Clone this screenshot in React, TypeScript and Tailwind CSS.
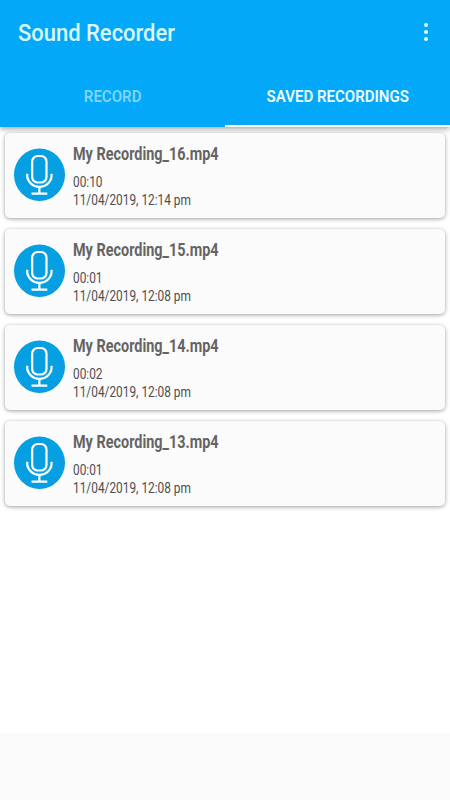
const recordings = [
  { name: "My Recording_16.mp4", length: "00:10", date: "11/04/2019, 12:14 pm" },
  { name: "My Recording_15.mp4", length: "00:01", date: "11/04/2019, 12:08 pm" },
  { name: "My Recording_14.mp4", length: "00:02", date: "11/04/2019, 12:08 pm" },
  { name: "My Recording_13.mp4", length: "00:01", date: "11/04/2019, 12:08 pm" },
];

const MicIcon = () => (
  <svg width="51" height="53" viewBox="0 0 51 53" fill="none" className="shrink-0">
    <ellipse cx="25.5" cy="26.7" rx="25.5" ry="26.2" fill="#059fe2" />
    <g stroke="white" strokeWidth="2.2">
      <rect x="18.2" y="8" width="14.3" height="26.5" rx="5.5" />
      <path d="M13.2 25.7v1.200a12.200 12 0 0 0 24.400 0v-1.200M25.400 38.900v6.800M17.500 45.700h15.800" />
    </g>
  </svg>
);

const App = () => {
  return (
    <div className="flex h-[800px] w-[450px] flex-col bg-white font-[Roboto,sans-serif]">
      <header className="flex h-[127px] flex-col bg-[#03a9f8] text-white shadow-[0_2px_5px_rgba(0,0,0,0.35)]">
        <div className="flex h-[66px] items-center justify-between pl-[17.5px] pr-[22px]">
          <h1 className="mt-[2px] origin-left scale-x-[0.955] text-[23px] font-medium text-[#dcf8ff]">
            Sound Recorder
          </h1>
          <svg width="4" height="18" viewBox="0 0 4 18" fill="#e4faff" className="-mt-[2px]">
            <circle cx="2" cy="2" r="2" />
            <circle cx="2" cy="9" r="2" />
            <circle cx="2" cy="16" r="2" />
          </svg>
        </div>
        <div className="flex flex-1 text-[16px] font-semibold">
          <button className="flex-1 pt-[1px] text-[#81d3fb]">
            <span className="inline-block scale-x-[0.94]">RECORD</span>
          </button>
          <button className="flex-1 border-b-2 border-white pt-[3px] text-[#f0fcff]">
            <span className="inline-block scale-x-[0.94]">SAVED RECORDINGS</span>
          </button>
        </div>
      </header>
      <main className="flex flex-1 flex-col gap-[11px] px-[5px] pt-[6px]">
        {recordings.map((rec) => (
          <div
            key={rec.name}
            className="flex h-[85px] gap-2 rounded-[5px] bg-[#fbfbfb] pl-[9px] pt-[15px] shadow-[0_1px_4px_rgba(0,0,0,0.38)]"
          >
            <MicIcon />
            <div className="-mt-[5px] text-[14.5px] leading-[18px] text-[#4e4e4e]">
              <h2 className="mb-[9px] origin-left scale-x-[0.824] text-[17.5px] leading-[22px] font-bold text-[#646464]">
                {rec.name}
              </h2>
              <p className="origin-left scale-x-[0.818]">{rec.length}</p>
              <p className="origin-left scale-x-[0.818]">{rec.date}</p>
            </div>
          </div>
        ))}
      </main>
      <footer className="h-[67px] bg-[#fbfbfb]" />
    </div>
  );
};

export default App;
